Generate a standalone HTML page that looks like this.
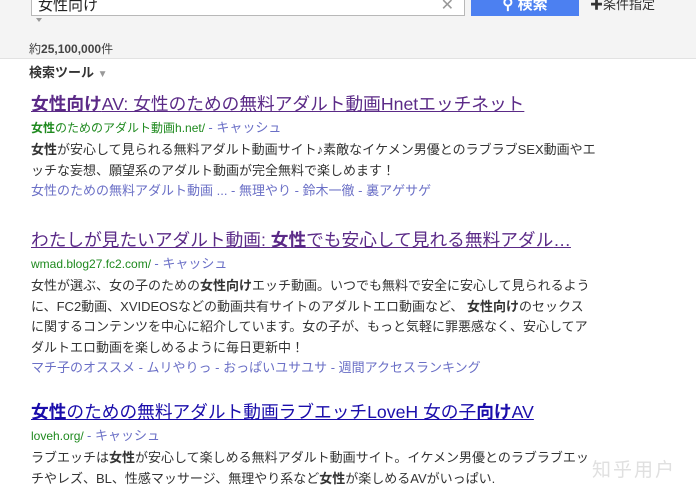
<!DOCTYPE html><html><head><meta charset="utf-8"><style>
body{margin:0;width:696px;height:500px;overflow:hidden;background:#fff;font-family:"Liberation Sans","Noto Sans CJK JP",sans-serif;position:relative}
.hdr{position:absolute;left:0;top:0;width:696px;height:58px;background:#f4f4f4;border-bottom:1px solid #e2e2e2}
.box{position:absolute;left:31px;top:-6px;width:434px;height:22px;background:#fff;border:1px solid #b8b8b8;font-size:15px;line-height:22px;padding-left:6px;box-sizing:border-box;color:#222}
.x{position:absolute;right:10px;top:0;color:#999;font-size:16px}
.btn{position:absolute;left:471px;top:-6px;width:108px;height:22px;background:#4c80f1;color:#fff;font-size:15px;font-weight:bold;text-align:center;line-height:22px}
.cond{position:absolute;left:590px;top:-6px;font-size:13px;color:#333}
.a{position:absolute;left:36px;top:18px;border-left:3px solid transparent;border-right:3px solid transparent;border-top:4px solid #999}
.cnt{position:absolute;left:29px;top:40px;font-size:12px;color:#444}
.tool{position:absolute;left:29px;top:62px;font-size:13px;font-weight:bold;color:#333}
.r{position:absolute;left:31px;width:640px}
.t{font-size:17.7px;color:#5b2a87;text-decoration:underline;white-space:nowrap;line-height:24px}
.t.b{color:#1a0dab}
.u{font-size:12px;color:#1f8a1f;line-height:24px}
.u span{color:#6a6fc6;font-size:13px}
.s{font-size:13px;color:#333;line-height:20.5px;white-space:nowrap}
.l{font-size:13px;color:#6a6fc6;line-height:20px}
.wm{position:absolute;left:592px;top:455px;font-size:19px;color:#e0e0e0;letter-spacing:2px}
</style></head><body>
<div class="hdr">
<div class="box">女性向け<span class="x">✕</span></div>
<div class="a"></div>
<div class="btn">⚲ 検索</div>
<div class="cond"><b>✚</b>条件指定</div>
<div class="cnt">約<b>25,100,000</b>件</div>
</div>
<div class="tool">検索ツール <span style="color:#999;font-size:10px">▼</span></div>
<div class="r" style="top:92px">
<div class="t"><b>女性向け</b>AV: 女性のための無料アダルト動画Hnetエッチネット</div>
<div class="u"><b>女性</b>のためのアダルト動画h.net/ <span>- キャッシュ</span></div>
<div class="s"><b>女性</b>が安心して見られる無料アダルト動画サイト♪素敵なイケメン男優とのラブラブSEX動画やエ<br>ッチな妄想、願望系のアダルト動画が完全無料で楽しめます！</div>
<div class="l">女性のための無料アダルト動画 ... - 無理やり - 鈴木一徹 - 裏アゲサゲ</div>
</div>
<div class="r" style="top:228px">
<div class="t">わたしが見たいアダルト動画: <b>女性</b>でも安心して見れる無料アダル<span style="text-decoration:none">…</span></div>
<div class="u">wmad.blog27.fc2.com/ <span>- キャッシュ</span></div>
<div class="s">女性が選ぶ、女の子のための<b>女性向け</b>エッチ動画。いつでも無料で安全に安心して見られるよう<br>に、FC2動画、XVIDEOSなどの動画共有サイトのアダルトエロ動画など、 <b>女性向け</b>のセックス<br>に関するコンテンツを中心に紹介しています。女の子が、もっと気軽に罪悪感なく、安心してア<br>ダルトエロ動画を楽しめるように毎日更新中！</div>
<div class="l">マチ子のオススメ - ムリやりっ - おっぱいユサユサ - 週間アクセスランキング</div>
</div>
<div class="r" style="top:400px">
<div class="t b"><b>女性</b>のための無料アダルト動画ラブエッチLoveH 女の子<b>向け</b>AV</div>
<div class="u">loveh.org/ <span>- キャッシュ</span></div>
<div class="s">ラブエッチは<b>女性</b>が安心して楽しめる無料アダルト動画サイト。イケメン男優とのラブラブエッ<br>チやレズ、BL、性感マッサージ、無理やり系など<b>女性</b>が楽しめるAVがいっぱい.</div>
</div>
<div class="wm">知乎用户</div>
</body></html>
